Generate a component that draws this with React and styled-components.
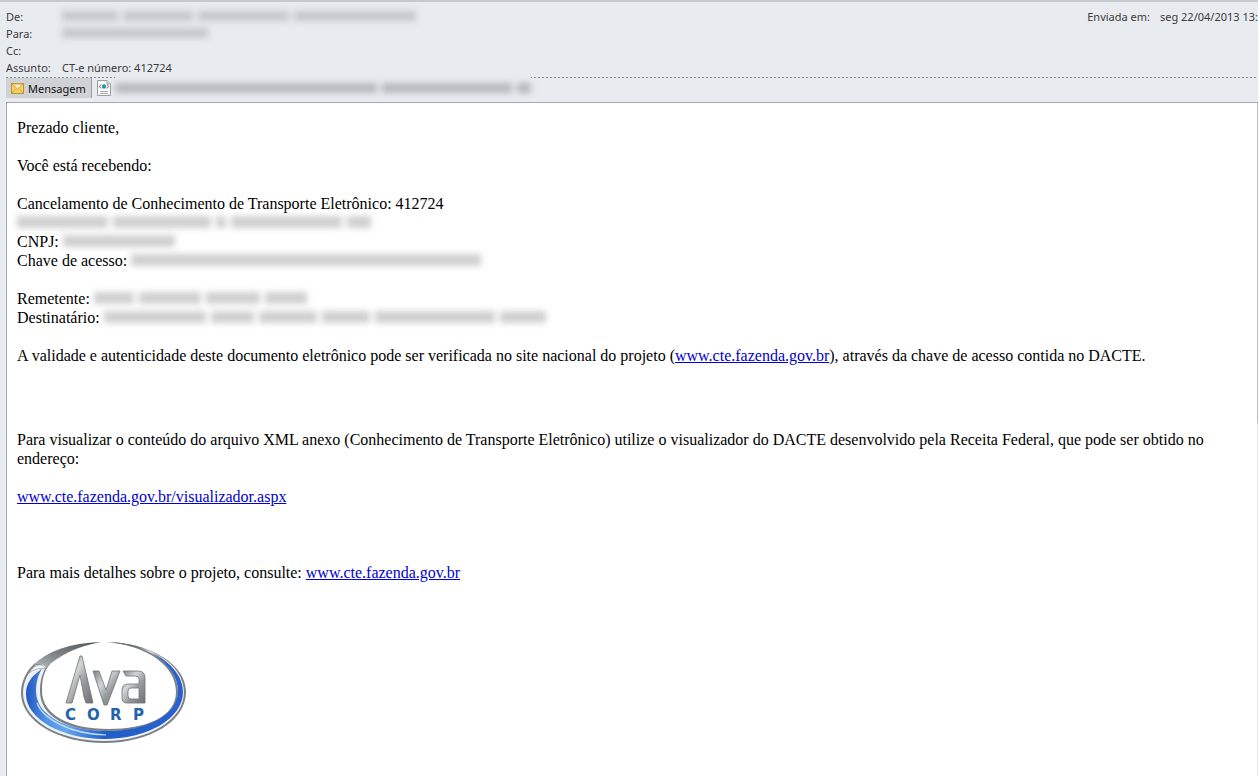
import React from 'react'
import styled, { createGlobalStyle } from 'styled-components'

const GlobalStyle = createGlobalStyle`
  * {
    box-sizing: border-box;
  }

  body {
    margin: 0;
    background: #fff;
  }
`

const Window = styled.div`
  min-height: 100vh;
  margin-right: 2px;
  display: flex;
  flex-direction: column;
  background: #e8ebef;
  border-top: 2px solid #c5c8cd;
  font-family: "Noto Sans", "Open Sans", sans-serif;
  font-size: 11px;
  color: #3b3b3b;
`

const Header = styled.header`
  display: flex;
  justify-content: space-between;
  padding: 6px 0 1px 6px;
  line-height: 17px;
  white-space: nowrap;
`

const Fields = styled.dl`
  margin: 0;
  display: grid;
  grid-template-columns: 56px auto;
  grid-auto-rows: 17px;
`

const Label = styled.dt``

const Value = styled.dd`
  margin: 0;
`

const Sent = styled.dl`
  margin: 0;
  display: flex;
  gap: 10px;
`

const TabBar = styled.nav`
  display: flex;
  align-items: flex-start;
  height: 25px;
  margin-left: 6px;
  background: repeating-linear-gradient(to right, #8b8e93 0 2px, transparent 2px 4px) top / 100% 1px no-repeat;
`

const Tab = styled.button`
  display: flex;
  align-items: center;
  gap: 4px;
  height: 20px;
  margin-top: 1px;
  padding: 0 5px;
  border: 0;
  border-right: ${props => props.$active ? "1px solid #9a9da1" : "0"};
  background: ${props => props.$active ? "#cfd3d6" : "transparent"};
  font: inherit;
  color: #111;
`

const FileName = styled.span`
  display: flex;
  align-items: center;
  height: 22px;
  margin-top: -2px;
  padding-top: 2px;
  background: #e8ebef;
`

const Redacted = styled.span`
  display: inline-flex;
  gap: 5px;
  vertical-align: baseline;
  filter: blur(3px);
`

const Word = styled.span`
  width: ${props => props.$width}px;
  height: ${props => props.$size === 'large' ? "12px" : "10px"};
  background: ${props => props.$tone};
`

/* the grey strip on the right is the scroll thumb */
const Message = styled.main`
  flex: 1;
  margin-left: 6px;
  padding: 15px 50px 32px 10px;
  background:
    linear-gradient(#b9bcbf, #b9bcbf) right top / 1px 320px no-repeat,
    linear-gradient(#e6e9eb, #e6e9eb) right top / 1px 100% no-repeat,
    #fff;
  border: 1px solid #a5a8ad;
  border-width: 1px 0 0 1px;
  font-family: "Liberation Serif", "Times New Roman", serif;
  font-size: 16px;
  line-height: 19px;
  color: #000;
`

const gaps = { normal: '19px', wide: '57px', wider: '65px' }

const Paragraph = styled.p`
  margin: 0 0 ${props => gaps[props.$gap || 'normal']};
`

const Link = styled.a`
  color: #0000d0;
`

const Mask = ({ words, size = 'small', tone = '#c5c8cc' }) => (
  <Redacted role="img" aria-label="Oculto">
    {words.map((width, i) => (
      <Word key={i} $width={width} $size={size} $tone={tone} />
    ))}
  </Redacted>
)

const EnvelopeIcon = () => (
  <svg width="13" height="11" viewBox="0 0 13 11" aria-hidden="true">
    <rect x="0.5" y="0.5" width="12" height="10" fill="#f5d263" stroke="#c0912f" />
    <path d="M1 10 5 5.5M12 10 8 5.5" stroke="#d9a63c" fill="none" />
    <path d="M1 1 6.5 6 12 1Z" fill="#fff3c4" stroke="#cf9f40" />
  </svg>
)

const FileIcon = () => (
  <svg width="14" height="16" viewBox="0 0 14 16" aria-hidden="true">
    <path d="M0.5 0.5H10L13.5 4V15.5H0.5Z" fill="#fff" stroke="#9b9da0" />
    <path d="M10 0.5V4H13.5" fill="#e3e5e8" stroke="#9b9da0" />
    <path d="M4 4.5 2.5 6.5 4 8.5M10 4.5 11.5 6.5 10 8.5" fill="none" stroke="#666" />
    <circle cx="7" cy="6.5" r="2.2" fill="#2699a5" />
    <path d="M3 11.5H11M3 13.5H11" stroke="#aaa" />
  </svg>
)

const Logo = styled.svg`
  display: block;
  width: 168px;
  height: 106px;
  margin-left: 3px;
`

const LogoLetter = styled.text`
  font-family: "DejaVu Sans", sans-serif;
  font-size: 15px;
  font-weight: 700;
  fill: #2463ac;
`

const AvaLogo = () => (
  <Logo viewBox="0 0 168 106" role="img" aria-label="Ava Corp">
    <defs>
      <linearGradient id="steel" x1="0" y1="0" x2="1" y2="1">
        <stop offset="0" stopColor="#7b7f81" />
        <stop offset="0.35" stopColor="#d3d6d7" />
        <stop offset="0.6" stopColor="#989c9e" />
        <stop offset="1" stopColor="#6d7173" />
      </linearGradient>
      <linearGradient id="blade" x1="0" y1="1" x2="1" y2="0">
        <stop offset="0" stopColor="#b9bdbf" />
        <stop offset="0.45" stopColor="#7d8284" />
        <stop offset="1" stopColor="#4f5456" />
      </linearGradient>
      <linearGradient id="blue" x1="0" y1="0" x2="1" y2="0">
        <stop offset="0" stopColor="#1f55c0" />
        <stop offset="0.12" stopColor="#4f8fe6" />
        <stop offset="0.25" stopColor="#69a6ee" />
        <stop offset="0.5" stopColor="#1f5fc8" />
        <stop offset="1" stopColor="#2b5fd2" />
      </linearGradient>
    </defs>
    {/* outer ring, its silver rim and the blue band inside */}
    <path fill="#7c8082" d="M15 24C6 32 1 43 1 54C1 82 38 104 84 104C130 104 166 82 166 53C166 25 130 4 87 3C128 7 156 27 156 53C156 78 126 90 88 90C50 90 22 76 22 52C22 42 23 34 30 25Z" />
    <path fill="#eef1f3" d="M16 26C8 33 3 43 3 54C3 81 39 102 84 102C129 102 164 81 164 53C164 34 147 16 120 9C144 18 158 34 158 53C158 79 127 92 87 92C48 92 20 78 20 52C20 42 22 34 28 25Z" />
    <path fill="#8d9294" d="M24 27C17 34 15 43 15 52C15 79 48 96 86 96C128 96 160 79 160 53C160 36 148 22 130 13L137 16C152 25 162 38 162 53C162 81 128 98 86 98C44 98 12 79 12 54C12 43 16 34 24 27Z" />
    <path fill="url(#blue)" d="M22 30C11 37 6 45 6 55C6 80 42 100 84 100C127 100 163 80 163 53C163 38 152 24 132 14C149 25 158 38 158 52C158 76 127 92 87 92C49 92 17 78 16 53C16 43 18 36 22 30Z" />
    <path fill="none" stroke="#c9e0fa" strokeWidth="1.2" d="M17 64C23 80 50 95 86 96" />
    <path fill="url(#blade)" d="M12 27C27 12 50 4 81 3C56 8 39 16 26 29C24 25 18 23 12 27Z" />
    <path fill="#f7f8f9" stroke="#8b8f91" strokeWidth="0.6" d="M9 34C14 26 23 23 25 30C20 28 13 31 9 34Z" />
    <path fill="#6a6f71" d="M87 3C100 3 113 6 124 9L113 8C104 5 96 4 87 3Z" />

    <g fill="url(#steel)" stroke="#6f7375" strokeWidth="0.8" strokeLinejoin="round">
      <path d="M46 64 60 17H62L73 64H66L64 58 60 36 52 64Z" />
      <path d="M73 32H79L86 51 92 32H100L87 66H84Z" />
      <path fillRule="evenodd" d="M103 32H118Q125 32 125 39V64H107Q102 64 102 59V51Q102 45 108 45H119V40Q119 37 115 37H106ZM111 49Q108 49 108 52V57Q108 60 111 60H119V49Z" />
    </g>
    <LogoLetter x="45" y="81">C</LogoLetter>
    <LogoLetter x="67" y="81">O</LogoLetter>
    <LogoLetter x="90" y="81">R</LogoLetter>
    <LogoLetter x="113" y="81">P</LogoLetter>
  </Logo>
)

const App = () => {
  return (
    <>
      <GlobalStyle />
      <Window>
        <Header>
          <Fields>
            <Label>De:</Label>
            <Value><Mask words={[56, 70, 91, 122]} /></Value>
            <Label>Para:</Label>
            <Value><Mask words={[146]} /></Value>
            <Label>Cc:</Label>
            <Value></Value>
            <Label>Assunto:</Label>
            <Value>CT-e número: 412724</Value>
          </Fields>
          <Sent>
            <Label>Enviada em:</Label>
            <Value>seg 22/04/2013 13:</Value>
          </Sent>
        </Header>

        <TabBar>
          <Tab type="button" $active><EnvelopeIcon /> Mensagem</Tab>
          <Tab type="button" aria-label="Anexo">
            <FileIcon />
            <FileName>
              <Mask words={[262, 130, 14]} tone="#b6b9bd" />
            </FileName>
          </Tab>
        </TabBar>

        <Message>
          <Paragraph>Prezado cliente,</Paragraph>
          <Paragraph>Você está recebendo:</Paragraph>
          <Paragraph>
            Cancelamento de Conhecimento de Transporte Eletrônico: 412724<br />
            <Mask words={[91, 98, 10, 111, 24]} size="large" tone="#d0d0d0" /><br />
            CNPJ: <Mask words={[112]} size="large" tone="#d0d0d0" /><br />
            Chave de acesso: <Mask words={[350]} size="large" tone="#d0d0d0" />
          </Paragraph>
          <Paragraph>
            Remetente: <Mask words={[40, 62, 54, 42]} size="large" tone="#d0d0d0" /><br />
            Destinatário: <Mask words={[102, 43, 58, 48, 120, 46]} size="large" tone="#d0d0d0" />
          </Paragraph>
          <Paragraph $gap="wider">
            A validade e autenticidade deste documento eletrônico pode ser verificada no site nacional do projeto (<Link href="http://www.cte.fazenda.gov.br">www.cte.fazenda.gov.br</Link>), através da chave de acesso contida no DACTE.
          </Paragraph>
          <Paragraph>
            Para visualizar o conteúdo do arquivo XML anexo (Conhecimento de Transporte Eletrônico) utilize o visualizador do DACTE desenvolvido pela Receita Federal, que pode ser obtido no endereço:
          </Paragraph>
          <Paragraph $gap="wide">
            <Link href="http://www.cte.fazenda.gov.br/visualizador.aspx">www.cte.fazenda.gov.br/visualizador.aspx</Link>
          </Paragraph>
          <Paragraph $gap="wide">
            Para mais detalhes sobre o projeto, consulte: <Link href="http://www.cte.fazenda.gov.br">www.cte.fazenda.gov.br</Link>
          </Paragraph>
          <AvaLogo />
        </Message>
      </Window>
    </>
  )
}

export default App
